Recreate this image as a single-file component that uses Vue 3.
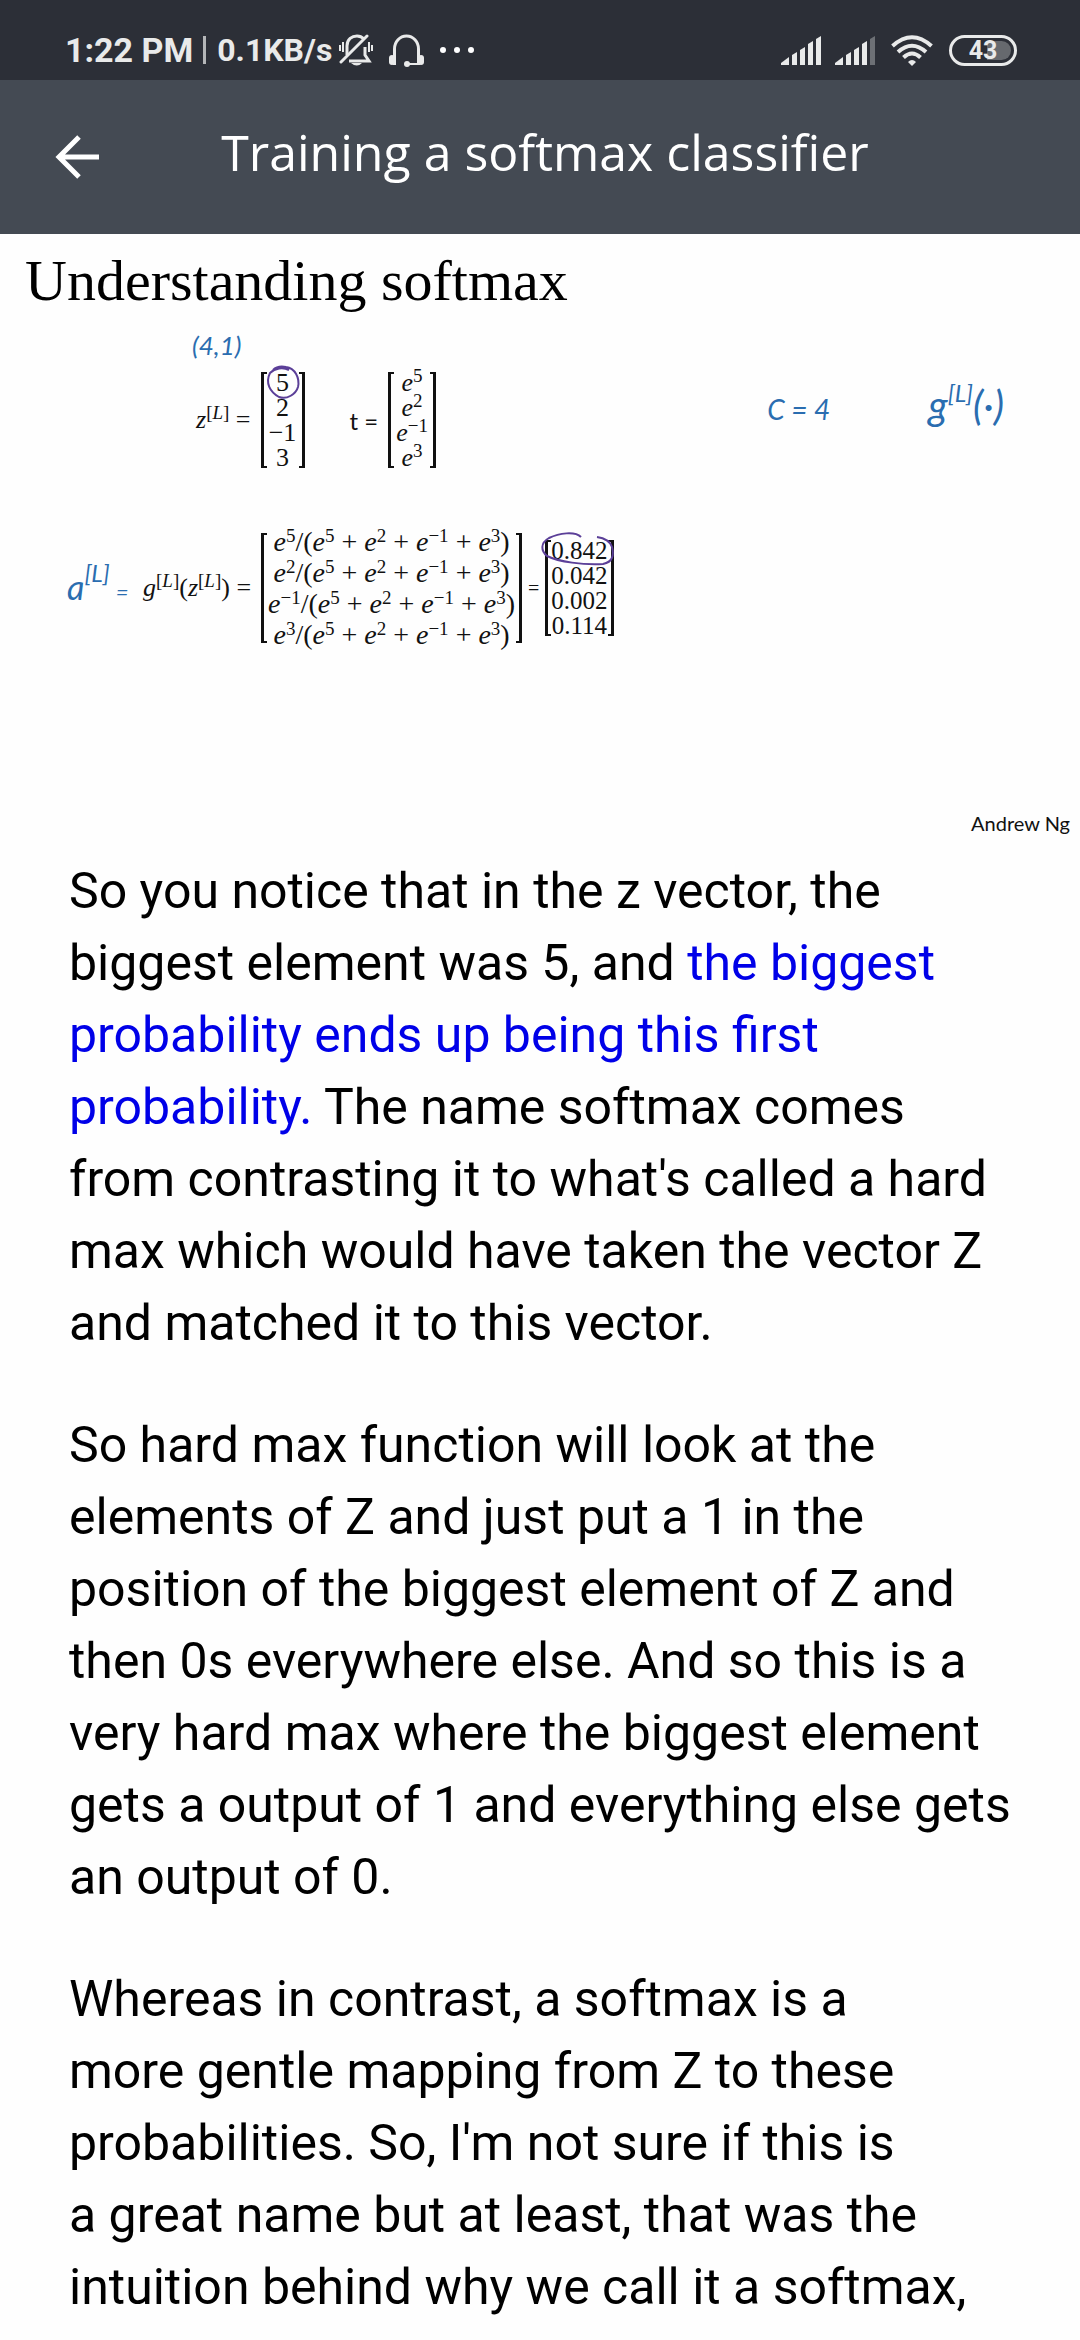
<script setup>
const powers = ['5', '2', '−1', '3']
const logits = ['5', '2', '−1', '3']
const outputs = ['0.842', '0.042', '0.002', '0.114']
const signals = [
  { id: 'sim1', level: 5 },
  { id: 'sim2', level: 4 },
]
const bars = [
  'M0 29V27L8 21V29Z',
  'M11 29V19L16 16V29Z',
  'M19 29V14L24 11V29Z',
  'M27 29V8L32 5V29Z',
  'M35 29V3L40 0V29Z',
]
</script>

<template>
  <div class="page">
    <div class="status">
      <div class="status-side">
        <span class="clock">1:22 PM</span>
        <span class="divider"></span>
        <span class="speed">0.1KB/s</span>
        <svg class="bell" width="34" height="33" viewBox="0 0 34 33" fill="none" stroke="currentColor">
          <path d="M8 21V12C8 5 13 2 18 2c3 0 5 1 7 3M26 13v8l4 6H10" stroke-width="3" />
          <path d="M2 28L28 2" stroke-width="3" stroke-linecap="round" />
          <path d="M1 11v6M4 8v10M30 8v10M33 11v6" stroke-width="2" />
          <path d="M12 29h11q-5 5-11 0z" fill="currentColor" stroke="none" />
        </svg>
        <svg class="headset" width="35" height="33" viewBox="0 0 35 33" fill="none" stroke="currentColor">
          <path d="M5.500 31V15a12 13 0 0 1 24 0V31" stroke-width="3" />
          <rect x="0" y="21" width="6" height="10" rx="3" fill="currentColor" stroke="none" />
          <rect x="29" y="21" width="6" height="10" rx="3" fill="currentColor" stroke="none" />
          <path d="M18 30h11" stroke-width="2" />
          <circle cx="18" cy="30" r="3" fill="currentColor" stroke="none" />
        </svg>
        <svg class="dots" width="34" height="6" viewBox="0 0 34 6" fill="#fff">
          <circle cx="3" cy="3" r="3" />
          <circle cx="17" cy="3" r="3" />
          <circle cx="31" cy="3" r="3" />
        </svg>
      </div>
      <div class="status-side">
        <svg v-for="s in signals" :key="s.id" class="signal" width="40" height="29" viewBox="0 0 40 29" fill="currentColor">
          <path v-for="(d, i) in bars" :key="d" :d="d" :opacity="i < s.level ? 1 : 0.35" />
        </svg>
        <svg class="wifi" width="42" height="31" viewBox="0 0 42 31" fill="none" stroke="currentColor" stroke-width="4">
          <path d="M1.500 11Q21-6.500 40.500 11" />
          <path d="M7 17Q21 4.500 35 17" />
          <path d="M12.500 22.500Q21 14.500 29.500 22.500" />
          <path d="M17 27q4-4 8 0l-4 4z" fill="currentColor" stroke="none" />
        </svg>
        <span class="battery"><span class="charge">43</span></span>
      </div>
    </div>

    <header class="bar">
      <button class="back" type="button" aria-label="Back">
        <svg width="44" height="44" viewBox="0 0 44 44" fill="none" stroke="currentColor" stroke-width="5">
          <path d="M24 2L4 22L24 42M4 22H44" />
        </svg>
      </button>
      <h1>Training a softmax classifier</h1>
    </header>

    <main>
      <section class="slide">
        <h2>Understanding softmax</h2>
        <p class="ink shape">(4,1)</p>

        <div class="row first">
          <div class="equation">
            <span class="side"><i>z</i><sup>[<i>L</i>]</sup> =</span>
            <div class="matrix">
              <div class="cells logits">
                <span v-for="n in logits" :key="n">{{ n }}</span>
              </div>
              <svg class="ring ring-logit" width="34" height="34" viewBox="0 0 34 34">
                <path d="M23 5C17 2 9 3 4 8C-1 18 4 27 13 32C21 35 30 29 32 22C34 13 29 3 20 2C15 1 10 2 7 5" />
              </svg>
            </div>
          </div>
          <div class="equation">
            <span class="side plain">t =</span>
            <div class="matrix">
              <div class="cells padded">
                <span v-for="p in powers" :key="p"><i>e</i><sup>{{ p }}</sup></span>
              </div>
            </div>
          </div>
          <div class="remarks ink">
            <span>C = 4</span>
            <span class="activation">g<sup>[L]</sup>(·)</span>
          </div>
        </div>

        <div class="row second">
          <span class="ink result">a<sup>[L]</sup><span class="equals">=</span></span>
          <span class="side"><i>g</i><sup>[<i>L</i>]</sup>(<i>z</i><sup>[<i>L</i>]</sup>) =</span>
          <div class="matrix tall">
            <div class="cells wide">
              <span v-for="p in powers" :key="p"><i>e</i><sup>{{ p }}</sup>/(<i>e</i><sup>5</sup> + <i>e</i><sup>2</sup> + <i>e</i><sup>−1</sup> + <i>e</i><sup>3</sup>)</span>
            </div>
          </div>
          <span class="between">=</span>
          <div class="matrix">
            <div class="cells outputs">
              <span v-for="n in outputs" :key="n">{{ n }}</span>
            </div>
            <svg class="ring ring-output" width="74" height="36" viewBox="0 0 74 36">
              <path d="M40 6C34 0 18 2 8 7C-1 12 0 20 6 25C18 31 42 34 62 33C72 31 73 24 71 16C69 10 63 7 56 6" />
            </svg>
          </div>
        </div>

        <p class="credit">Andrew Ng</p>
      </section>

      <article class="transcript">
        <p>
          So you notice that in the z vector, the biggest element was 5, and
          <mark>the biggest probability ends up being this first probability.</mark>
          The name softmax comes from contrasting it to what's called a hard max which would have taken the vector Z and matched it to this vector.
        </p>
        <p>
          So hard max function will look at the elements of Z and just put a 1 in the position of the biggest element of Z and then 0s everywhere else. And so this is a very hard max where the biggest element gets a output of 1 and everything else gets an output of 0.
        </p>
        <p>
          Whereas in contrast, a softmax is a more&nbsp;gentle mapping from Z to these probabilities. So, I'm not sure if this is a&nbsp;great name but at least, that was the intuition behind why we call it a softmax,
        </p>
      </article>
    </main>
  </div>
</template>

<style>
body {
  margin: 0;
  background: #fefefe;
}
</style>

<style scoped>
.page {
  color: #000;
  font-family: Roboto, sans-serif;
}

h1,
h2,
p {
  margin: 0;
  font-weight: 400;
}

.status {
  display: flex;
  justify-content: space-between;
  height: 80px;
  padding: 18px 63px 0 65px;
  box-sizing: border-box;
  background: #2c2f37;
  color: #e9eaea;
}

.status-side {
  display: flex;
  align-items: center;
  height: 64px;
}

.clock {
  font-size: 34px;
  font-weight: 700;
}

.divider {
  width: 3px;
  height: 28px;
  margin: 0 11px 0 10px;
  background: #b4b6b8;
}

.speed {
  font-size: 32px;
  font-weight: 700;
}

.bell {
  margin-left: 7px;
}

.headset {
  margin-left: 16px;
}

.dots {
  margin-left: 16px;
}

.signal {
  margin-right: 14px;
}

.wifi {
  margin: 0 16px 0 2px;
}

.battery {
  box-sizing: border-box;
  width: 68px;
  height: 31px;
  padding: 3px;
  border: 3px solid #e9eaea;
  border-radius: 16px;
}

.charge {
  display: block;
  height: 19px;
  border-radius: 10px;
  background: linear-gradient(90deg, transparent 57%, #66696e 57%);
  font-size: 25px;
  font-weight: 700;
  line-height: 19px;
  text-align: center;
}

.bar {
  display: flex;
  align-items: center;
  height: 154px;
  background: #444a53;
  color: #fff;
}

.back {
  display: flex;
  width: 156px;
  padding: 0 0 0 55px;
  box-sizing: border-box;
  border: 0;
  background: none;
  color: inherit;
}

.bar h1 {
  flex: 1;
  padding: 0 146px 10px 0;
  font-family: "Open Sans", sans-serif;
  font-size: 50px;
  line-height: 68px;
  text-align: center;
}

.slide {
  color: #111;
  font-family: "Liberation Serif", serif;
  font-size: 26px;
  white-space: nowrap;
}

.slide h2 {
  padding: 15px 25px 0;
  color: #000;
  font-size: 58px;
  line-height: 64px;
}

sup {
  font-size: 19px;
  line-height: 0;
  vertical-align: 9px;
}

.ink {
  color: #2a6db0;
  font-family: Lato, sans-serif;
  font-style: italic;
}

.shape {
  padding: 16px 192px 3px;
  line-height: 32px;
}

.row {
  display: flex;
  align-items: center;
  height: 112px;
}

.first {
  padding: 0 76px 0 196px;
}

.equation {
  display: flex;
  align-items: center;
  margin-right: 45px;
}

.side {
  margin-right: 10px;
}

.plain {
  font-family: Lato, sans-serif;
  font-size: 24px;
}

.matrix {
  position: relative;
  display: flex;
  align-items: center;
}

.matrix::before,
.matrix::after {
  content: "";
  box-sizing: border-box;
  width: 6px;
  height: 96px;
  border: solid #111;
  border-width: 2px 0 2px 3px;
}

.matrix::after {
  border-width: 2px 3px 2px 0;
}

.tall::before,
.tall::after {
  height: 110px;
}

.cells {
  display: flex;
  flex-direction: column;
  line-height: 25px;
  text-align: center;
}

.logits {
  width: 32px;
}

.padded {
  padding: 0 2px;
}

.wide {
  padding: 0 1px;
  font-size: 28px;
  line-height: 31px;
}

.outputs {
  font-size: 25px;
}

.ring {
  position: absolute;
  overflow: visible;
  fill: none;
  stroke: #5b3f98;
  stroke-width: 2;
}

.ring-logit {
  top: -5px;
  left: 5px;
}

.ring-output {
  top: -7px;
  left: -4px;
}

.remarks {
  display: flex;
  align-items: baseline;
  gap: 98px;
  margin-left: auto;
  padding-bottom: 30px;
  font-size: 28px;
}

.activation {
  font-size: 40px;
}

.ink sup {
  font-size: 24px;
  vertical-align: 18px;
}

.second {
  margin-top: 56px;
  padding-left: 67px;
}

.result {
  width: 76px;
  padding-bottom: 4px;
  font-size: 34px;
}

.equals {
  margin-left: 6px;
  font-size: 22px;
}

.between {
  margin: 0 6px;
  font-size: 20px;
}

.credit {
  margin-top: 165px;
  padding: 0 10px 4px;
  font-family: Lato, sans-serif;
  font-size: 20px;
  line-height: 28px;
  text-align: right;
}

.transcript {
  display: flex;
  flex-direction: column;
  gap: 50px;
  padding: 14px 64px 20px 69px;
  font-size: 50px;
  line-height: 72px;
}

mark {
  background: none;
  color: #0000e8;
}
</style>
